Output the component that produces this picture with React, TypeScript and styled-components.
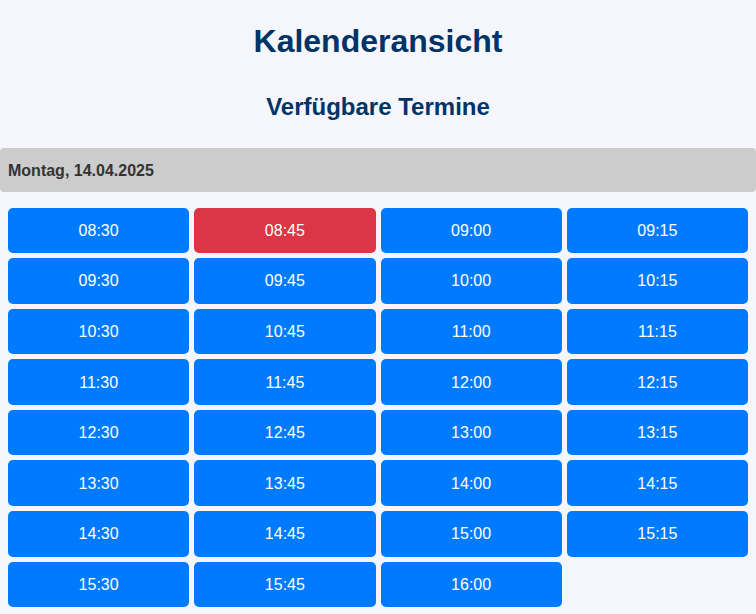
import React from "react";
import styled, { createGlobalStyle } from "styled-components";

const GlobalStyle = createGlobalStyle`
  html, body {
    margin: 0;
    padding: 0;
    background: #f4f6fb;
    font-family: "Liberation Sans", Arial, sans-serif;
  }
`;

const Page = styled.div`
  display: flex;
  flex-direction: column;
  background: #f4f6fb;
`;

const Title = styled.h1`
  margin: 23px 0 32.5px;
  font-size: 32px;
  font-weight: bold;
  line-height: normal;
  text-align: center;
  color: #003366;
`;

const Subtitle = styled.h2`
  margin: 0 0 27px;
  font-size: 24px;
  font-weight: bold;
  line-height: normal;
  text-align: center;
  color: #003366;
`;

const DayHeader = styled.div`
  box-sizing: border-box;
  height: 44px;
  display: flex;
  align-items: center;
  padding: 2px 8px 0;
  background: #cccccc;
  border-radius: 4px;
  font-size: 16px;
  font-weight: bold;
  color: #333333;
`;

const Grid = styled.div`
  display: grid;
  grid-template-columns: repeat(4, 1fr);
  gap: 5px;
  padding: 16px 8px 6px;
`;

const SlotButton = styled.button<{ $booked?: boolean }>`
  box-sizing: border-box;
  height: 45.6px;
  border: none;
  border-radius: 5px;
  background: ${(p) => (p.$booked ? "#dc3545" : "#007bff")};
  color: #ffffff;
  font-family: "Liberation Sans", Arial, sans-serif;
  font-size: 16px;
  cursor: pointer;
  padding: 1px 0 0;
`;

const times = [
  "08:30", "08:45", "09:00", "09:15",
  "09:30", "09:45", "10:00", "10:15",
  "10:30", "10:45", "11:00", "11:15",
  "11:30", "11:45", "12:00", "12:15",
  "12:30", "12:45", "13:00", "13:15",
  "13:30", "13:45", "14:00", "14:15",
  "14:30", "14:45", "15:00", "15:15",
  "15:30", "15:45", "16:00",
];

const booked = new Set(["08:45"]);

export default function App() {
  return (
    <>
      <GlobalStyle />
      <Page>
        <Title>Kalenderansicht</Title>
        <Subtitle>Verfügbare Termine</Subtitle>
        <DayHeader>Montag, 14.04.2025</DayHeader>
        <Grid>
          {times.map((t) => (
            <SlotButton key={t} $booked={booked.has(t)}>
              {t}
            </SlotButton>
          ))}
        </Grid>
      </Page>
    </>
  );
}
